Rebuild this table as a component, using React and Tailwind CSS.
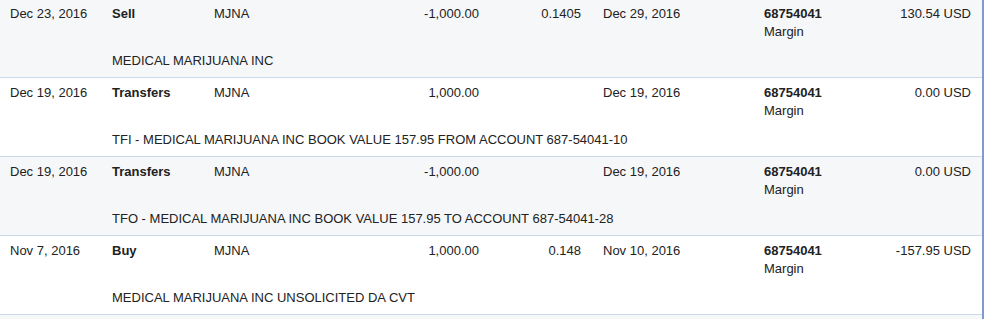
const rows = [
  {
    date: 'Dec 23, 2016',
    type: 'Sell',
    symbol: 'MJNA',
    qty: '-1,000.00',
    price: '0.1405',
    settle: 'Dec 29, 2016',
    account: '68754041',
    accountType: 'Margin',
    amount: '130.54 USD',
    desc: 'MEDICAL MARIJUANA INC',
  },
  {
    date: 'Dec 19, 2016',
    type: 'Transfers',
    symbol: 'MJNA',
    qty: '1,000.00',
    price: '',
    settle: 'Dec 19, 2016',
    account: '68754041',
    accountType: 'Margin',
    amount: '0.00 USD',
    desc: 'TFI - MEDICAL MARIJUANA INC BOOK VALUE 157.95 FROM ACCOUNT 687-54041-10',
  },
  {
    date: 'Dec 19, 2016',
    type: 'Transfers',
    symbol: 'MJNA',
    qty: '-1,000.00',
    price: '',
    settle: 'Dec 19, 2016',
    account: '68754041',
    accountType: 'Margin',
    amount: '0.00 USD',
    desc: 'TFO - MEDICAL MARIJUANA INC BOOK VALUE 157.95 TO ACCOUNT 687-54041-28',
  },
  {
    date: 'Nov 7, 2016',
    type: 'Buy',
    symbol: 'MJNA',
    qty: '1,000.00',
    price: '0.148',
    settle: 'Nov 10, 2016',
    account: '68754041',
    accountType: 'Margin',
    amount: '-157.95 USD',
    desc: 'MEDICAL MARIJUANA INC UNSOLICITED DA CVT',
  },
]

function ActivityRow({ row, shaded }) {
  return (
    <div
      className={`h-[79px] border-b border-[#cbd8e8] pl-[10px] pr-[11px] pt-[7px] ${
        shaded ? 'bg-[#f6f7f9]' : 'bg-white'
      }`}
    >
      <div className="flex h-[47px] items-start leading-4">
        <div className="w-[102px]">{row.date}</div>
        <div className="w-[102px] font-bold">{row.type}</div>
        <div className="w-[165px]">{row.symbol}</div>
        <div className="w-[100px] text-right">{row.qty}</div>
        <div className="w-[102px] text-right">{row.price}</div>
        <div className="w-[183px] pl-[22px]">{row.settle}</div>
        <div className="w-[120px]">
          <div className="font-bold">{row.account}</div>
          <div className="mt-[2px]">{row.accountType}</div>
        </div>
        <div className="flex-1 text-right">{row.amount}</div>
      </div>
      <div className="ml-[102px] leading-4">{row.desc}</div>
    </div>
  )
}

export default function App() {
  return (
    <div className="h-[319px] w-[984px] overflow-hidden bg-[#f6f7f9] font-['Liberation_Sans',Arial,sans-serif] text-[13px] text-[#222]">
      <div className="-mt-px h-[320px] border-r-2 border-[#7f9acb]">
        {rows.map((row, i) => (
          <ActivityRow key={i} row={row} shaded={i % 2 === 0} />
        ))}
      </div>
    </div>
  )
}
